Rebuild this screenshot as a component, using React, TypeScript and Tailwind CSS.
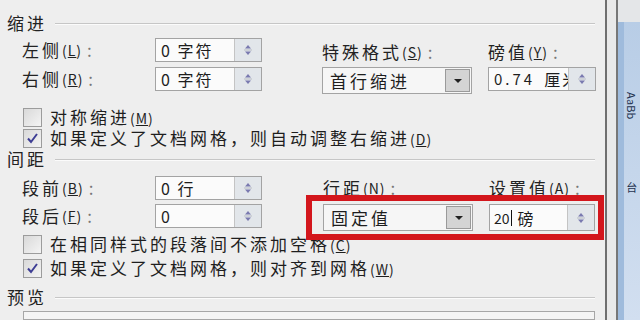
import type { ReactNode } from "react";

const cjk = "font-['Noto_Sans_CJK_SC','Noto_Sans',sans-serif]";

function Key({ k }: { k: string }) {
  return (
    <span className="text-[14px] tracking-[1px]">
      (<span className="underline">{k}</span>)
    </span>
  );
}

function Section({ title }: { title: string }) {
  return (
    <div className="flex h-[20px] items-center">
      <span className="text-[17px] leading-[20px] tracking-[3px] text-[#222]">{title}</span>
      <div className="ml-[8px] h-px flex-1 bg-[#c6c6c6] shadow-[0_1px_0_#fbfbfb]" />
    </div>
  );
}

function SpinArrows() {
  return (
    <div className="flex w-[27px] flex-col items-center justify-center border-l border-[#c4c4c4] bg-[#e2e6ea]">
      <svg width="10" height="14" viewBox="0 0 10 14">
        <path d="M5 2 L8 5.5 L2 5.5 Z" fill="#7a7ab0" />
        <line x1="1" y1="7" x2="9" y2="7" stroke="#b8bcc4" />
        <path d="M5 12 L8 8.5 L2 8.5 Z" fill="#7a7ab0" />
      </svg>
    </div>
  );
}

function Spinner({ w, children }: { w: string; children: ReactNode }) {
  return (
    <div className={`flex h-[24px] ${w} border border-[#a3a3a3] bg-[#fbfbfb]`}>
      <div className="flex flex-1 items-center overflow-hidden whitespace-nowrap pl-[5px] text-[16px] leading-[20px] tracking-[2px] text-[#1e1e1e]">
        {children}
      </div>
      <SpinArrows />
    </div>
  );
}

function Dropdown({ text }: { text: string }) {
  return (
    <div className="flex h-[27px] w-[150px] border border-[#a3a3a3] bg-[#f6f6f6]">
      <div className="flex flex-1 items-center pl-[7px] text-[17px] leading-[20px] tracking-[3px] text-[#1e1e1e]">
        {text}
      </div>
      <div className="m-[1px] flex w-[25px] items-center justify-center border border-[#9a9a9a] bg-[#d4d4d4]">
        <svg width="10" height="6" viewBox="0 0 10 6">
          <path d="M1 1 L9 1 L5 5 Z" fill="#222" />
        </svg>
      </div>
    </div>
  );
}

function Label({ text, k }: { text: string; k: string }) {
  return (
    <div className="flex items-center whitespace-nowrap text-[17px] leading-[20px] tracking-[3px] text-[#222]">
      {text}
      <Key k={k} />
      <span className="ml-[5px] text-[#777]">:</span>
    </div>
  );
}

function Check({ checked, text, k }: { checked?: boolean; text: string; k: string }) {
  return (
    <div className="ml-[16px] flex h-[20px] items-center">
      <div className="flex h-[19px] w-[19px] items-center justify-center border border-[#9c9c9c] bg-gradient-to-br from-[#d9d9d9] to-[#f4f4f4]">
        {checked && (
          <svg width="13" height="12" viewBox="0 0 13 12">
            <path d="M2 6.5 L5 10 L11 2" fill="none" stroke="#3d3d94" strokeWidth="2" />
          </svg>
        )}
      </div>
      <span className="ml-[8px] whitespace-nowrap text-[17px] leading-[20px] tracking-[3px] text-[#1e1e1e]">
        {text}
        <Key k={k} />
      </span>
    </div>
  );
}

export default function App() {
  return (
    <div className={`flex h-[320px] w-[640px] overflow-hidden bg-[#eeeeee] ${cjk}`}>
      <div className="flex w-[607px] flex-col border-r-2 border-[#6f6f6f] pl-[7px] pr-[10px] pt-[13px]">
        <Section title="缩进" />

        <div className="ml-[15px] mt-[5px] grid grid-cols-[133px_107px_60px_150px_16px_108px] grid-rows-[24px_24px] gap-y-[5px]">
          <Label text="左侧" k="L" />
          <Spinner w="w-[107px]">0 字符</Spinner>
          <div />
          <div className="self-end">
            <Label text="特殊格式" k="S" />
          </div>
          <div />
          <div className="self-end">
            <Label text="磅值" k="Y" />
          </div>

          <Label text="右侧" k="R" />
          <Spinner w="w-[107px]">0 字符</Spinner>
          <div />
          <Dropdown text="首行缩进" />
          <div />
          <Spinner w="w-[108px]">
            <span className="text-[15px] tracking-[3px]">0.74</span>
            <span className="ml-[9px]">厘米</span>
          </Spinner>
        </div>

        <div className="mt-[16px] flex flex-col gap-[1px]">
          <Check text="对称缩进" k="M" />
          <Check checked text="如果定义了文档网格，则自动调整右缩进" k="D" />
        </div>

        <div className="mt-[1px]">
          <Section title="间距" />
        </div>

        <div className="relative ml-[15px] mt-[7px] grid grid-cols-[133px_107px_61px_150px_16px_106px] grid-rows-[24px_24px] gap-y-[4px]">
          <Label text="段前" k="B" />
          <Spinner w="w-[107px]">0 行</Spinner>
          <div />
          <Label text="行距" k="N" />
          <div />
          <Label text="设置值" k="A" />

          <Label text="段后" k="F" />
          <Spinner w="w-[107px]">0</Spinner>
          <div />
          <Dropdown text="固定值" />
          <div />
          <div className="h-[27px]">
            <div className="flex h-[27px] w-[106px] border border-[#a3a3a3] bg-[#fbfbfb]">
              <div className="flex flex-1 items-center pl-[4px] text-[16px] leading-[20px] text-[#1e1e1e]">
                <span className="text-[14px]">20</span>
                <span className="ml-[1px] h-[16px] w-px bg-[#111]" />
                <span className="ml-[6px]">磅</span>
              </div>
              <SpinArrows />
            </div>
          </div>

          <div className="absolute left-[284px] top-[19px] h-[45px] w-[298px] border-[6px] border-[#d3161c]" />
        </div>

        <div className="mt-[6px] flex flex-col gap-[4px]">
          <Check text="在相同样式的段落间不添加空格" k="C" />
          <Check checked text="如果定义了文档网格，则对齐到网格" k="W" />
        </div>

        <div className="mt-[9px]">
          <Section title="预览" />
        </div>

        <div className="ml-[16px] mt-[4px] flex-1 border border-[#a6a6a6] bg-[#f4f4f4]" />
      </div>

      <div className="w-[12px] bg-[#e9e9e9]" />
      <div className="w-[2px] bg-[#777]" />
      <div className="flex flex-1 flex-col bg-[#dde6ef]">
        <div className="h-[22px] bg-[#e4e6e8]" />
        <div className="flex flex-1">
          <div className="w-[6px] bg-[#9fbbdc]" />
          <div className="flex flex-1 flex-col items-center gap-[60px] bg-gradient-to-b from-[#b8cde6] to-[#d2dff0] pt-[70px] text-[11px] text-[#1f3350]">
            <span className="[writing-mode:vertical-rl]">AaBb</span>
            <span>台</span>
          </div>
        </div>
      </div>
    </div>
  );
}
